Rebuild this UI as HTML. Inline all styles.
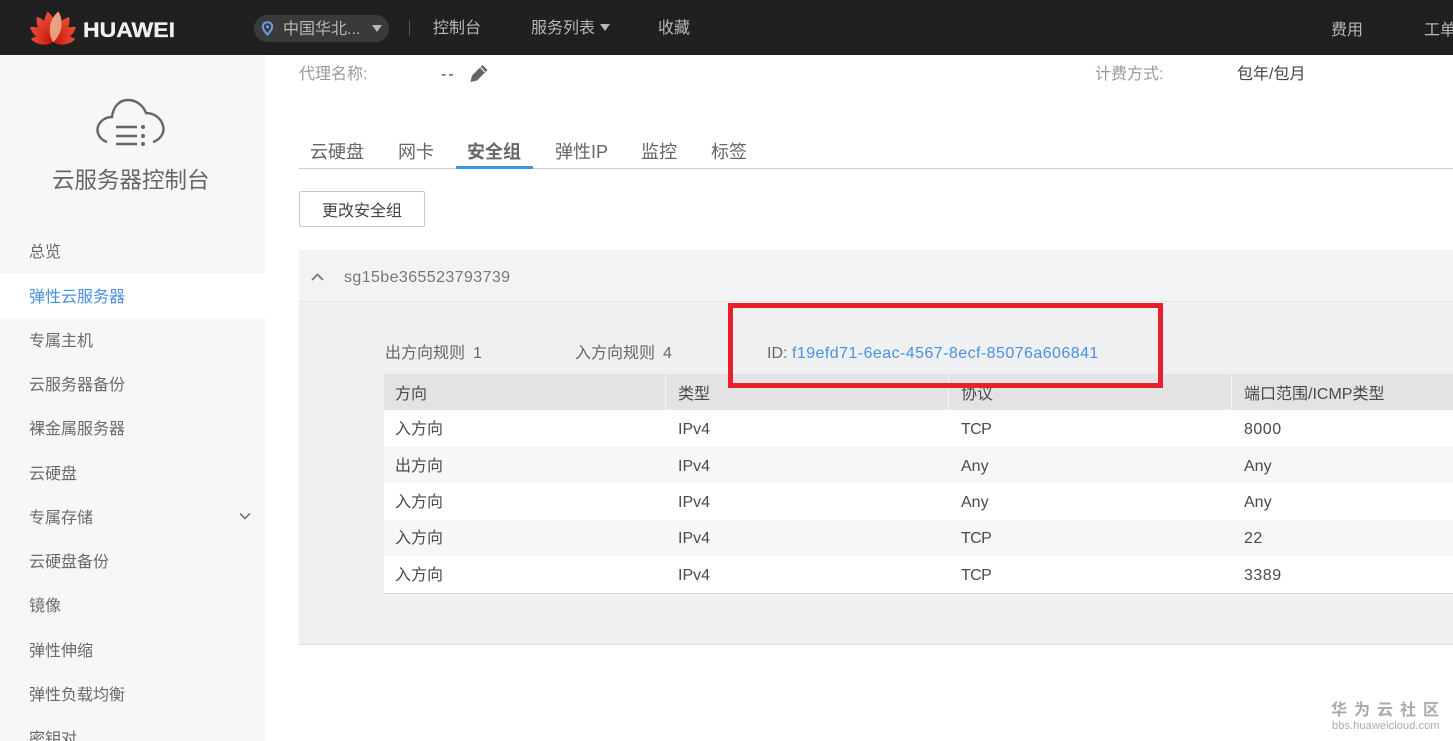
<!DOCTYPE html>
<html lang="zh"><head><meta charset="utf-8"><title>云服务器控制台</title>
<style>
html,body{margin:0;padding:0;width:1453px;height:741px;overflow:hidden;background:#fff}
body{position:relative;font-family:"Liberation Sans","Noto Sans CJK SC",sans-serif;font-size:16px;color:#444}
.t{position:absolute;white-space:nowrap;line-height:20px;margin-top:2px}
.b{position:absolute}
.top{color:#b5b7b8}
.side{color:#6a6a6a}
.tab{font-size:18px;line-height:24px;color:#666;margin-top:1px}
.tb{color:#4a4a4a}
.tc{letter-spacing:-.6px}
.n{letter-spacing:.5px}
</style></head><body>
<!-- header -->
<div class="b" style="left:0;top:0;width:1453px;height:55px;background:#202020"></div>
<svg class="b" style="left:28px;top:9px" width="50" height="37" viewBox="0 0 50 37">
<defs><linearGradient id="g" x1="0" y1="0" x2="0" y2="1"><stop offset="0" stop-color="#ef4f36"/><stop offset="1" stop-color="#c4160f"/></linearGradient></defs>
<g fill="url(#g)">
<path transform="translate(25 33) rotate(-82) scale(.72)" d="M0 0C-7 -8 -8 -22 0 -31C8 -22 7 -8 0 0Z"/>
<path transform="translate(25 33) rotate(82) scale(.72)" d="M0 0C-7 -8 -8 -22 0 -31C8 -22 7 -8 0 0Z"/>
<path transform="translate(25 33) rotate(-57) scale(.88)" d="M0 0C-7 -8 -8 -22 0 -31C8 -22 7 -8 0 0Z"/>
<path transform="translate(25 33) rotate(57) scale(.88)" d="M0 0C-7 -8 -8 -22 0 -31C8 -22 7 -8 0 0Z"/>
<path transform="translate(25 33) rotate(-33) scale(.96)" d="M0 0C-7 -8 -8 -22 0 -31C8 -22 7 -8 0 0Z"/>
<path transform="translate(25 33) rotate(33) scale(.96)" d="M0 0C-7 -8 -8 -22 0 -31C8 -22 7 -8 0 0Z"/>
<path transform="translate(25 33) rotate(-10)" d="M0 0C-7 -8 -8 -22 0 -31C8 -22 7 -8 0 0Z"/>
</g>
<path transform="translate(25 33) rotate(10)" d="M0 0C-7 -8 -8 -22 0 -31C8 -22 7 -8 0 0Z" fill="#e8a080"/>
</svg>
<div class="t" style="left:83px;top:19px;margin-top:0;font-size:21px;font-weight:bold;color:#f0f0f0;line-height:24px;transform:scaleX(1.095);transform-origin:0 50%;-webkit-text-stroke:.3px #f0f0f0">HUAWEI</div>
<div class="b" style="left:254px;top:15px;width:135px;height:27px;border-radius:14px;background:#3a3a3a"></div>
<svg class="b" style="left:261px;top:21px" width="13" height="15" viewBox="0 0 13 15"><path d="M6.500 1.200C3.800 1.200 1.800 3.200 1.800 5.800C1.800 9 6.500 13.500 6.500 13.500C6.500 13.500 11.200 9 11.200 5.800C11.200 3.200 9.200 1.200 6.500 1.200Z" fill="none" stroke="#6e9be8" stroke-width="2"/><circle cx="6.500" cy="5.800" r="1.500" fill="#6e9be8"/></svg>
<div class="t top" style="left:283px;top:18px">中国华北...</div>
<svg class="b" style="left:372px;top:25px" width="10" height="8"><path d="M0 0H10L5 7Z" fill="#b5b7b8"/></svg>
<div class="b" style="left:409px;top:20px;width:1px;height:16px;background:#555"></div>
<div class="t top" style="left:433px;top:17px">控制台</div>
<div class="t top" style="left:531px;top:17px">服务列表</div>
<svg class="b" style="left:600px;top:24px" width="10" height="8"><path d="M0 0H10L5 7Z" fill="#b5b7b8"/></svg>
<div class="t top" style="left:658px;top:17px">收藏</div>
<div class="t top" style="left:1331px;top:19px">费用</div>
<div class="t top" style="left:1424px;top:19px">工单</div>

<!-- sidebar -->
<div class="b" style="left:0;top:55px;width:265px;height:686px;background:#f6f7f8"></div>
<div class="b" style="left:0;top:273px;width:265px;height:45px;background:#fff"></div>
<svg class="b" style="left:94px;top:96px" width="72" height="54" viewBox="0 0 72 54" fill="none" stroke="#666" stroke-width="2.400">
<path d="M13 46C7 44 3.500 39 3.500 34C3.500 27 10 21 18 21C19 11 25 4 34 4C42 4 49 9 52 17C62 17 69.500 25 69.500 33C69.500 39 65 44 59 46"/>
<path d="M22 31H43M22 40H43M22 48H43"/>
<circle cx="49" cy="31" r="2" fill="#666" stroke="none"/><circle cx="49" cy="40" r="2" fill="#666" stroke="none"/><circle cx="49" cy="48" r="2" fill="#666" stroke="none"/>
</svg>
<div class="t" style="left:52px;top:165px;font-size:22.500px;line-height:28px;color:#666">云服务器控制台</div>
<div class="t side" style="left:29px;top:241px">总览</div>
<div class="t" style="left:29px;top:286px;color:#4a90e2">弹性云服务器</div>
<div class="t side" style="left:29px;top:330px">专属主机</div>
<div class="t side" style="left:29px;top:374px">云服务器备份</div>
<div class="t side" style="left:29px;top:418px">裸金属服务器</div>
<div class="t side" style="left:29px;top:463px">云硬盘</div>
<div class="t side" style="left:29px;top:507px">专属存储</div>
<svg class="b" style="left:238px;top:512px" width="14" height="9" fill="none" stroke="#666" stroke-width="1.500"><path d="M2 1.500L7 6.500L12 1.500"/></svg>
<div class="t side" style="left:29px;top:551px">云硬盘备份</div>
<div class="t side" style="left:29px;top:595px">镜像</div>
<div class="t side" style="left:29px;top:640px">弹性伸缩</div>
<div class="t side" style="left:29px;top:684px">弹性负载均衡</div>
<div class="t side" style="left:29px;top:728px">密钥对</div>

<!-- info -->
<div class="t" style="left:299px;top:63px;color:#999">代理名称:</div>
<div class="t" style="left:441px;top:65px;margin-top:0;letter-spacing:2px">--</div>
<svg class="b" style="left:469px;top:63px" width="20" height="20" viewBox="0 0 20 20"><path d="M1.500 19L3 12.500L13.500 2L18.500 7L8 17.500Z" fill="#666"/><path d="M11.500 4.500L16 9" stroke="#fff" stroke-width="1"/></svg>
<div class="t" style="left:1095px;top:63px;color:#999">计费方式:</div>
<div class="t" style="left:1237px;top:63px;color:#444">包年/包月</div>

<!-- tabs -->
<div class="b" style="left:299px;top:168px;width:1154px;height:1px;background:#ccc"></div>
<div class="b" style="left:456px;top:166px;width:77px;height:3px;background:#3c95e8"></div>
<div class="t tab" style="left:310px;top:139px">云硬盘</div>
<div class="t tab" style="left:398px;top:139px">网卡</div>
<div class="t tab" style="left:467px;top:139px;font-weight:bold">安全组</div>
<div class="t tab" style="left:555px;top:139px">弹性IP</div>
<div class="t tab" style="left:641px;top:139px">监控</div>
<div class="t tab" style="left:711px;top:139px">标签</div>

<div class="b" style="left:299px;top:191px;width:124px;height:34px;border:1px solid #c8c8c8;border-radius:2px"></div>
<div class="t" style="left:322px;top:200px;color:#444">更改安全组</div>

<!-- panel -->
<div class="b" style="left:299px;top:250px;width:1154px;height:395px;background:#eff0f1;border-bottom:1px solid #ddd;box-sizing:border-box"></div>
<div class="b" style="left:299px;top:250px;width:1154px;height:52px;background:#f2f3f4;border-bottom:1px solid #e4e5e6;box-sizing:border-box"></div>
<svg class="b" style="left:310px;top:271px" width="15" height="11" fill="none" stroke="#777" stroke-width="1.800"><path d="M2 9L7.500 3.500L13 9"/></svg>
<div class="t" style="left:344px;top:266px;color:#777;letter-spacing:.4px">sg15be365523793739</div>
<div class="t" style="left:385px;top:342px;color:#666">出方向规则</div>
<div class="t" style="left:473px;top:342px;color:#666">1</div>
<div class="t" style="left:575px;top:342px;color:#666">入方向规则</div>
<div class="t" style="left:663px;top:342px;color:#666">4</div>
<div class="t" style="left:767px;top:342px;color:#666">ID:</div>
<div class="t" style="left:792px;top:342px;color:#4a90e2;letter-spacing:.44px">f19efd71-6eac-4567-8ecf-85076a606841</div>

<!-- table -->
<div class="b" style="left:384px;top:374px;width:1069px;height:220px;background:#fff;border-bottom:1px solid #d8d8d8;box-sizing:border-box"></div>
<div class="b" style="left:384px;top:374px;width:1069px;height:36px;background:#e1e3e4"></div>
<div class="b" style="left:665px;top:374px;width:1px;height:36px;background:#f5f5f5"></div>
<div class="b" style="left:948px;top:374px;width:1px;height:36px;background:#f5f5f5"></div>
<div class="b" style="left:1231px;top:374px;width:1px;height:36px;background:#f5f5f5"></div>
<div class="b" style="left:384px;top:447px;width:1069px;height:36px;background:#f6f7f7"></div>
<div class="b" style="left:384px;top:520px;width:1069px;height:36px;background:#f6f7f7"></div>

<div class="t tb" style="left:395px;top:383px">方向</div><div class="t tb" style="left:678px;top:383px">类型</div><div class="t tb" style="left:961px;top:383px">协议</div><div class="t tb" style="left:1244px;top:383px">端口范围/ICMP类型</div>
<div class="t tb" style="left:395px;top:418px">入方向</div><div class="t tb" style="left:678px;top:418px">IPv4</div><div class="t tb tc" style="left:961px;top:418px">TCP</div><div class="t tb n" style="left:1244px;top:418px">8000</div>
<div class="t tb" style="left:395px;top:455px">出方向</div><div class="t tb" style="left:678px;top:455px">IPv4</div><div class="t tb" style="left:961px;top:455px">Any</div><div class="t tb" style="left:1244px;top:455px">Any</div>
<div class="t tb" style="left:395px;top:491px">入方向</div><div class="t tb" style="left:678px;top:491px">IPv4</div><div class="t tb" style="left:961px;top:491px">Any</div><div class="t tb" style="left:1244px;top:491px">Any</div>
<div class="t tb" style="left:395px;top:527px">入方向</div><div class="t tb" style="left:678px;top:527px">IPv4</div><div class="t tb tc" style="left:961px;top:527px">TCP</div><div class="t tb n" style="left:1244px;top:527px">22</div>
<div class="t tb" style="left:395px;top:564px">入方向</div><div class="t tb" style="left:678px;top:564px">IPv4</div><div class="t tb tc" style="left:961px;top:564px">TCP</div><div class="t tb n" style="left:1244px;top:564px">3389</div>

<!-- red box -->
<div class="b" style="left:728px;top:303px;width:435px;height:85px;border:5px solid #e8202c;box-sizing:border-box"></div>

<!-- watermark -->
<div class="t" style="left:1331px;top:699px;font-size:16px;color:#aaa;letter-spacing:7px;font-weight:bold">华为云社区</div>
<div class="t" style="left:1332px;top:716px;font-size:11px;line-height:16px;color:#aaa;letter-spacing:.1px">bbs.huaweicloud.com</div>
</body></html>
